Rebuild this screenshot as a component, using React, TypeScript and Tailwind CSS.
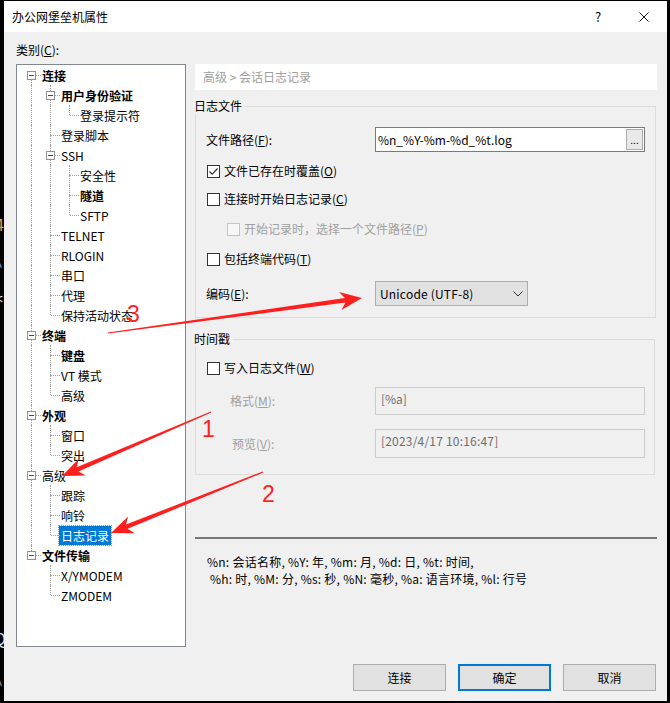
import React from 'react';

type TreeNode = { t: string; b?: boolean; sel?: boolean; kids?: TreeNode[] };

const TREE: TreeNode[] = [
  {
    t: '连接',
    b: true,
    kids: [
      { t: '用户身份验证', b: true, kids: [{ t: '登录提示符' }] },
      { t: '登录脚本' },
      { t: 'SSH', kids: [{ t: '安全性' }, { t: '隧道', b: true }, { t: 'SFTP' }] },
      { t: 'TELNET' },
      { t: 'RLOGIN' },
      { t: '串口' },
      { t: '代理' },
      { t: '保持活动状态' },
    ],
  },
  { t: '终端', b: true, kids: [{ t: '键盘', b: true }, { t: 'VT 模式' }, { t: '高级' }] },
  { t: '外观', b: true, kids: [{ t: '窗口' }, { t: '突出' }] },
  { t: '高级', kids: [{ t: '跟踪' }, { t: '响铃' }, { t: '日志记录', sel: true }] },
  { t: '文件传输', b: true, kids: [{ t: 'X/YMODEM' }, { t: 'ZMODEM' }] },
];

type Row = { node: TreeNode; level: number; first: boolean; last: boolean; rails: boolean[] };

function flatten(nodes: TreeNode[], level: number, rails: boolean[], out: Row[]): Row[] {
  nodes.forEach((n, i) => {
    const last = i === nodes.length - 1;
    out.push({ node: n, level, first: level === 0 && i === 0, last, rails });
    if (n.kids) flatten(n.kids, level + 1, [...rails, !last], out);
  });
  return out;
}

const ROWS = flatten(TREE, 0, [], []);

// tapered screenshot-tool arrow, tail -> tip
function arrow(tx: number, ty: number, px: number, py: number) {
  const hl = 22, hw = 9, ws = 4.5, wt = 1.2, sweep = 5;
  const dx = px - tx, dy = py - ty;
  const len = Math.hypot(dx, dy);
  const ux = dx / len, uy = dy / len;
  const nx = -uy, ny = ux;
  const bx = px - ux * hl, by = py - uy * hl;
  const jx = bx + ux * sweep, jy = by + uy * sweep;
  const pts = [
    [tx + (nx * wt) / 2, ty + (ny * wt) / 2],
    [jx + (nx * ws) / 2, jy + (ny * ws) / 2],
    [bx + nx * hw, by + ny * hw],
    [px, py],
    [bx - nx * hw, by - ny * hw],
    [jx - (nx * ws) / 2, jy - (ny * ws) / 2],
    [tx - (nx * wt) / 2, ty - (ny * wt) / 2],
  ];
  return pts.map((p) => p.map((v) => v.toFixed(1)).join(',')).join(' ');
}

function TreeRow({ row }: { row: Row }) {
  const { node, first, last, rails } = row;
  return (
    <div className="flex h-[20px] items-center">
      {rails.map((on, k) => (
        <div key={k} className="relative h-full w-[19px] shrink-0">
          {on && <span className="absolute top-0 bottom-0 left-[9px] border-l border-dotted border-[#a0a0a0]" />}
        </div>
      ))}
      <div className="relative h-full w-[19px] shrink-0">
        {!first && <span className="absolute top-0 left-[9px] h-[10px] border-l border-dotted border-[#a0a0a0]" />}
        {!last && <span className="absolute top-[10px] bottom-0 left-[9px] border-l border-dotted border-[#a0a0a0]" />}
        <span className="absolute top-[10px] right-0 left-[10px] border-t border-dotted border-[#a0a0a0]" />
        {node.kids && (
          <span className="absolute top-[6px] left-[5px] flex h-[9px] w-[9px] items-center justify-center border border-[#919191] bg-white">
            <span className="h-px w-[5px] bg-[#2c4a93]" />
          </span>
        )}
      </div>
      <span
        className={`-ml-px px-[2px] leading-[19px] whitespace-nowrap ${node.b ? 'font-bold' : ''} ${
          node.sel ? 'bg-[#0078d7] text-white outline-1 outline-dotted outline-[#c8902a]' : 'text-black'
        }`}
      >
        {node.t}
      </span>
    </div>
  );
}

function CheckBox({ checked, disabled }: { checked?: boolean; disabled?: boolean }) {
  return (
    <span
      className={`flex h-[13px] w-[13px] shrink-0 items-center justify-center border ${
        disabled ? 'border-[#c4c4c4] bg-[#f7f7f7]' : 'border-[#333333] bg-white'
      }`}
    >
      {checked && (
        <svg width="11" height="11" viewBox="0 0 11 11">
          <polyline points="1.5,5.5 4.2,8.2 9.5,2.5" fill="none" stroke="#333" strokeWidth="1.2" />
        </svg>
      )}
    </span>
  );
}

function CheckRow({ label, k, checked, disabled, mt, pl }: { label: string; k: string; checked?: boolean; disabled?: boolean; mt: string; pl: string }) {
  const [a, b] = label.split('#');
  return (
    <div className={`flex h-[20px] items-center gap-[4px] ${mt} ${pl} ${disabled ? 'text-[#a0a0a0]' : 'text-black'}`}>
      <CheckBox checked={checked} disabled={disabled} />
      <span>
        {a}
        <u>{k}</u>
        {b}
      </span>
    </div>
  );
}

export default function App() {
  return (
    <div className="relative h-[703px] w-[670px] overflow-hidden bg-black pt-[1px] pr-[3px] pb-[2px] pl-[4px] text-[12px] leading-[16px] [font-family:'Noto_Sans_CJK_SC',sans-serif]">
      {/* desktop peeking through on the left */}
      <div className="absolute top-0 left-0 h-full w-[4px] overflow-hidden">
        <span className="absolute top-[216px] -left-[5px] text-[16px] text-[#e0a040]">4</span>
        <span className="absolute top-[258px] -left-[5px] text-[14px] text-[#6fa8ff]">^</span>
        <span className="absolute top-[290px] -left-[5px] text-[14px] text-white">&lt;</span>
        <span className="absolute top-[630px] -left-[6px] text-[16px] text-[#cfe0ff]">Q</span>
        <span className="absolute top-[676px] -left-[5px] text-[14px] text-[#9ab]">^</span>
      </div>

      <div className="flex h-full flex-col bg-[#f0f0f0]">
        {/* title bar */}
        <div className="flex h-[31px] shrink-0 items-center bg-white pl-[8px] text-black">
          <span>办公网堡垒机属性</span>
          <span className="ml-auto flex w-[46px] justify-center text-[13px]">?</span>
          <span className="flex w-[46px] justify-center">
            <svg width="10" height="10" viewBox="0 0 10 10">
              <path d="M0.5 0.5 L9.5 9.5 M9.5 0.5 L0.5 9.5" stroke="#111" strokeWidth="1" />
            </svg>
          </span>
        </div>

        <div className="flex flex-1 flex-col pr-[10px] pl-[12px]">
          <div className="mt-[8px] h-[20px] leading-[20px] text-black">
            类别(<u>C</u>):
          </div>

          <div className="mt-[4px] flex h-[583px] gap-[9px]">
            {/* category tree */}
            <div className="w-[170px] shrink-0 border border-[#828790] bg-white pl-[5px]">
              {ROWS.map((r, i) => (
                <TreeRow key={i} row={r} />
              ))}
            </div>

            {/* page */}
            <div className="flex flex-1 flex-col">
              <div className="flex h-[26px] items-center bg-white pl-[8px] text-[#a0a0a0]">高级 &gt; 会话日志记录</div>

              <fieldset className="mt-[8px] mr-[1px] border border-[#dcdcdc] p-0 pb-[11px]">
                <legend className="-ml-[5px] px-[3px] leading-[16px] text-black">日志文件</legend>
                <div className="mt-[13px] flex h-[25px] items-center">
                  <span className="w-[179px] shrink-0 pl-[10px] text-black">
                    文件路径(<u>F</u>):
                  </span>
                  <div className="flex h-[25px] w-[270px] items-stretch border border-[#7a7a7a] bg-white">
                    <span className="flex flex-1 items-center pl-[2px] text-black">%n_%Y-%m-%d_%t.log</span>
                    <span className="my-[1px] mr-[1px] flex w-[17px] items-center justify-center border border-[#adadad] bg-[#e9e9e9] text-[10px] leading-none text-black">
                      ...
                    </span>
                  </div>
                </div>
                <CheckRow label="文件已存在时覆盖(#)" k="O" checked mt="mt-[9px]" pl="pl-[11px]" />
                <CheckRow label="连接时开始日志记录(#)" k="C" mt="mt-[8px]" pl="pl-[11px]" />
                <CheckRow label="开始记录时，选择一个文件路径(#)" k="P" disabled mt="mt-[10px]" pl="pl-[31px]" />
                <CheckRow label="包括终端代码(#)" k="T" mt="mt-[10px]" pl="pl-[11px]" />
                <div className="mt-[12px] flex h-[25px] items-center">
                  <span className="w-[179px] shrink-0 pl-[10px] text-black">
                    编码(<u>E</u>):
                  </span>
                  <div className="flex h-[25px] w-[153px] items-center border border-[#adadad] bg-[#e1e1e1] pr-[4px] pl-[4px] text-black">
                    <span className="flex-1 tracking-[0.2px]">Unicode (UTF-8)</span>
                    <svg width="10" height="6" viewBox="0 0 10 6">
                      <polyline points="0.5,0.5 5,5 9.5,0.5" fill="none" stroke="#333" strokeWidth="1" />
                    </svg>
                  </div>
                </div>
              </fieldset>

              <fieldset className="mt-[13px] mr-[2px] border border-[#dcdcdc] p-0 pb-[16px]">
                <legend className="-ml-[5px] px-[3px] leading-[16px] text-black">时间戳</legend>
                <CheckRow label="写入日志文件(#)" k="W" mt="mt-[11px]" pl="pl-[11px]" />
                <div className="mt-[9px] flex h-[28px] items-center">
                  <span className="w-[179px] shrink-0 pl-[34px] text-[#a0a0a0]">
                    格式(<u>M</u>):
                  </span>
                  <div className="h-[28px] w-[270px] border border-[#cccccc] pt-[3px] pl-[5px] text-[#6d6d6d]">[%a]</div>
                </div>
                <div className="mt-[14px] flex h-[29px] items-center">
                  <span className="w-[179px] shrink-0 pl-[36px] text-[#a0a0a0]">
                    预览(<u>V</u>):
                  </span>
                  <div className="h-[29px] w-[270px] border border-[#cccccc] pt-[3px] pl-[5px] tracking-[0.2px] text-[#6d6d6d]">
                    [2023/4/17 10:16:47]
                  </div>
                </div>
              </fieldset>

              <div className="mt-[62px] h-[2px] bg-[#777777]" />

              <div className="mt-[14px] pl-[12px] leading-[17px] tracking-[0.25px] whitespace-pre text-black">
                <div>%n: 会话名称, %Y: 年, %m: 月, %d: 日, %t: 时间,</div>
                <div> %h: 时, %M: 分, %s: 秒, %N: 毫秒, %a: 语言环境, %l: 行号</div>
              </div>
            </div>
          </div>

          {/* dialog buttons */}
          <div className="mt-[17px] flex justify-end gap-[12px] pr-[1px]">
            <button className="h-[27px] w-[93px] border border-[#adadad] bg-[#e1e1e1] text-black">连接</button>
            <button className="h-[27px] w-[93px] border-2 border-[#0078d7] bg-[#e1e1e1] text-black">确定</button>
            <button className="h-[27px] w-[93px] border border-[#adadad] bg-[#e1e1e1] text-black">取消</button>
          </div>
        </div>
      </div>

      {/* red annotations drawn over the dialog */}
      <svg className="pointer-events-none absolute inset-0" width="670" height="703" viewBox="0 0 670 703">
        <g fill="#ff1f1f">
          <polygon points={arrow(108, 333, 362, 298)} />
          <polygon points={arrow(211, 412, 62, 476)} />
          <polygon points={arrow(263, 472, 111, 533)} />
        </g>
        <g fill="#ff1f1f" fontFamily="'Liberation Sans', Arial, sans-serif" fontSize="23">
          <text x="127" y="322">3</text>
          <text x="202" y="437">1</text>
          <text x="262" y="502">2</text>
        </g>
      </svg>
    </div>
  );
}
